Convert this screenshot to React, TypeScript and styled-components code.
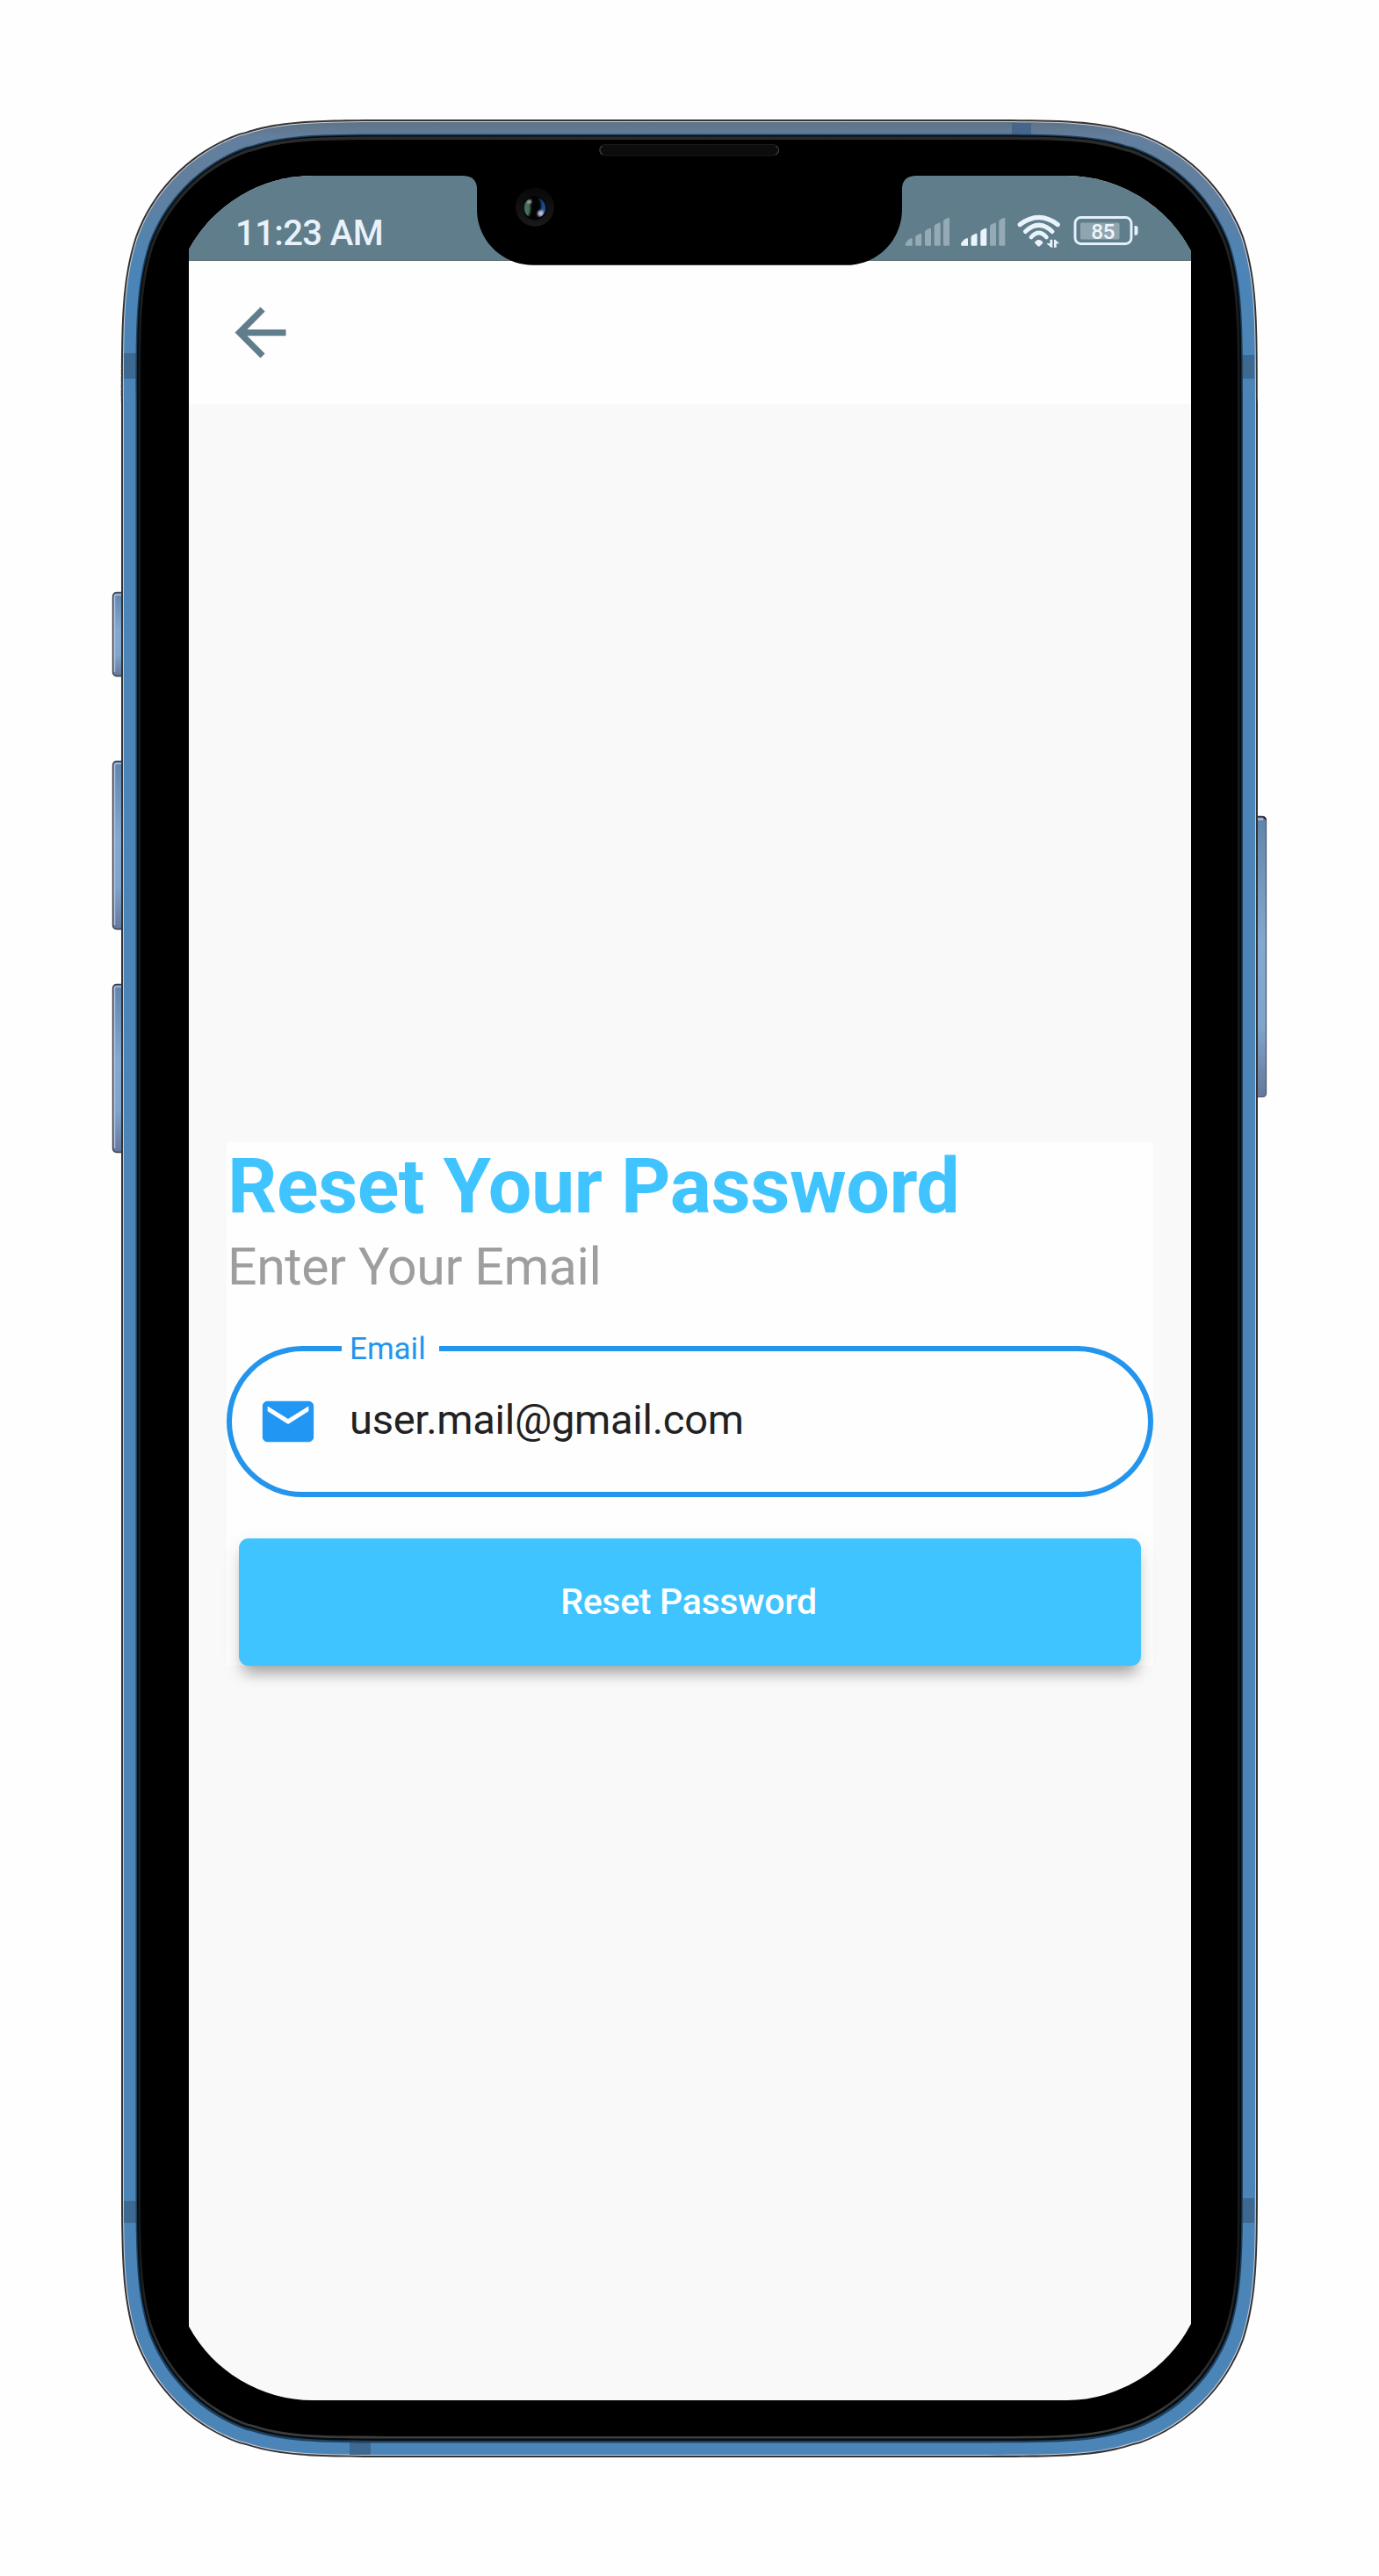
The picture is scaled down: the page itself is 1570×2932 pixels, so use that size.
import React from "react";
import styled, { createGlobalStyle } from "styled-components";

const GlobalStyle = createGlobalStyle`
  *, *::before, *::after { box-sizing: border-box; }
  body { margin: 0; background: #fefefe; font-family: Roboto, "Liberation Sans", sans-serif; }
`;

/** Rounded rectangle with continuous-curvature corners. */
function squircle(x: number, y: number, w: number, h: number, r: number) {
  const a = 1.52866471 * r, b = 1.08849323 * r, c = 0.86840701 * r, d = 0.66993427 * r;
  const e = 0.065496 * r, f = 0.63149399 * r, g = 0.07491176 * r, i = 0.37282392 * r, j = 0.16905899 * r;
  const X = x + w, Y = y + h;
  return [
    `M${x + a} ${y}H${X - a}`,
    `C${X - b} ${y} ${X - c} ${y} ${X - d} ${y + e}L${X - f} ${y + g}`,
    `C${X - i} ${y + j} ${X - j} ${y + i} ${X - g} ${y + f}`,
    `C${X} ${y + c} ${X} ${y + b} ${X} ${y + a}V${Y - a}`,
    `C${X} ${Y - b} ${X} ${Y - c} ${X - g} ${Y - f}`,
    `C${X - j} ${Y - i} ${X - i} ${Y - j} ${X - f} ${Y - g}L${X - d} ${Y - e}`,
    `C${X - c} ${Y} ${X - b} ${Y} ${X - a} ${Y}H${x + a}`,
    `C${x + b} ${Y} ${x + c} ${Y} ${x + d} ${Y - e}L${x + f} ${Y - g}`,
    `C${x + i} ${Y - j} ${x + j} ${Y - i} ${x + g} ${Y - f}`,
    `C${x} ${Y - c} ${x} ${Y - b} ${x} ${Y - a}V${y + a}`,
    `C${x} ${y + b} ${x} ${y + c} ${x + g} ${y + f}`,
    `C${x + j} ${y + i} ${x + i} ${y + j} ${x + f} ${y + g}L${x + d} ${y + e}`,
    `C${x + c} ${y} ${x + b} ${y} ${x + a} ${y}Z`,
  ].join("");
}

const Page = styled.main`
  position: relative;
  width: 1570px;
  height: 2932px;
  padding: 200px 214px 200px 215px;
  background: #fefefe;
  overflow: hidden;
`;

const FrameArt = styled.svg`
  position: absolute;
  inset: 0;
`;

const NotchArt = styled.svg`
  position: absolute;
  left: 528px;
  top: 199px;
`;

const Screen = styled.section`
  position: relative;
  display: flex;
  flex-direction: column;
  width: 1141px;
  height: 2532px;
  background: #f9f9f9;
  clip-path: path("M0 84A161 161 0 0 1 141 0H1000A161 161 0 0 1 1141 86V2445A161 161 0 0 1 1000 2532H141A161 161 0 0 1 0 2448Z");
`;

const StatusBar = styled.header`
  display: flex;
  justify-content: space-between;
  height: 97px;
  padding: 41px 60px 0 53px;
  background: #607d8b;
  border-bottom: 1px solid #627679;
`;

const Clock = styled.time`
  padding-top: 1px;
  font-size: 40px;
  line-height: 48px;
  font-weight: 500;
  letter-spacing: -0.6px;
  color: #e9f1fa;
`;

const StatusIcons = styled.svg`
  display: block;
`;

const AppBar = styled.nav`
  height: 163px;
  padding: 38px;
  background: #fefefe;
`;

const BackButton = styled.button`
  display: block;
  padding: 0;
  border: 0;
  background: none;
  color: #607d8b;
  line-height: 0;
`;

const Body = styled.div`
  flex: 1;
  padding: 840px 43px 0;
`;

const Card = styled.form`
  display: flex;
  flex-direction: column;
  height: 595.5px;
  background: #fefefe;
`;

const Title = styled.h1`
  margin: 0;
  padding-left: 1px;
  font-size: 88px;
  line-height: 100px;
  font-weight: 700;
  letter-spacing: -0.45px;
  color: #40c4ff;
  white-space: nowrap;
`;

const Subtitle = styled.p`
  margin: 7px 0 0;
  padding-left: 1px;
  font-size: 59px;
  line-height: 69px;
  letter-spacing: -0.4px;
  color: #9e9e9e;
  white-space: nowrap;
`;

const Field = styled.fieldset`
  height: 190px;
  min-width: 0;
  margin: 38px 0 0;
  padding: 0 0 0 29px;
  border: 6px solid #2395ec;
  border-radius: 86px;
`;

const FieldLabel = styled.legend`
  width: 111px;
  margin-left: 96px;
  padding: 2px 0 0 9px;
  font-size: 35px;
  line-height: 40px;
  color: #2395ec;
`;

const FieldRow = styled.div`
  display: flex;
  align-items: center;
  height: 124px;
  color: #2196f3;
`;

const FieldInput = styled.input`
  flex: 1;
  min-width: 0;
  margin-left: 35px;
  padding: 0 0 5px;
  border: 0;
  outline: 0;
  background: none;
  font: 400 47px/56px Roboto, "Liberation Sans", sans-serif;
  letter-spacing: -0.25px;
  color: #212121;
`;

const SubmitButton = styled.button`
  height: 145px;
  margin: auto 14px 0;
  padding: 0 3px 1px 0;
  border: 0;
  border-radius: 11px;
  background: #3fc4ff;
  color: #fff;
  font: 500 41px/48px Roboto, "Liberation Sans", sans-serif;
  letter-spacing: -0.3px;
  box-shadow: 0 14px 15px -6px rgba(0, 0, 0, 0.26), 0 8px 22px rgba(0, 0, 0, 0.12);
`;

function DeviceFrame() {
  return (
    <FrameArt width="1570" height="2932" viewBox="0 0 1570 2932">
      <defs>
        <linearGradient id="metal" gradientUnits="userSpaceOnUse" x1="0" y1="139" x2="0" y2="310">
          <stop offset="0" stopColor="#5f7386" />
          <stop offset="0.1" stopColor="#637f9d" />
          <stop offset="0.45" stopColor="#617f9e" />
          <stop offset="1" stopColor="#4b85b8" />
        </linearGradient>
        <linearGradient id="key" x1="0" y1="0" x2="0" y2="1">
          <stop offset="0" stopColor="#5f85ab" />
          <stop offset="0.45" stopColor="#82a9cf" />
          <stop offset="0.75" stopColor="#7ea5cb" />
          <stop offset="1" stopColor="#65789c" />
        </linearGradient>
        <linearGradient id="rim" x1="0" y1="0" x2="0" y2="1">
          <stop offset="0" stopColor="#2b2b2b" />
          <stop offset="0.1" stopColor="#14191c" />
          <stop offset="0.92" stopColor="#14191c" />
          <stop offset="1" stopColor="#3d3d3d" />
        </linearGradient>
      </defs>
      {[[674, 96], [866, 192], [1120, 192]].map(([y, h]) => (
        <g key={y}>
          <rect x="128.5" y={y + 0.5} width="16" height={h - 1} rx="4" fill="url(#key)" stroke="#3b3c4c" strokeWidth="1.4" />
          <path d={`M130.5 ${y + h - 5}V${y + 5}Q130.5 ${y + 3} 133 ${y + 3}H138`} fill="none" stroke="#b3c0df" strokeWidth="1.5" />
        </g>
      ))}
      <rect x="1426" y="929.5" width="15.5" height="319" rx="4" fill="url(#key)" stroke="#53546b" strokeWidth="1.2" />
      <path d="M1432 929.5H1437Q1440 929.5 1441 933" fill="none" stroke="#22222a" strokeWidth="1.6" />
      <path d="M1432 932.5H1438" stroke="#b9bfdd" strokeWidth="2" />
      <path d={squircle(138, 136, 1294, 2661, 212)} fill="#333334" />
      <path d={squircle(140, 138, 1290, 2657, 210)} fill="#d0ced6" />
      <path d={squircle(141, 139, 1288, 2655, 209)} fill="url(#metal)" />
      <g fill="#3d688f">
        <rect x="141" y="402" width="16" height="29" />
        <rect x="1413" y="404" width="15" height="27" />
        <rect x="1152" y="140" width="22" height="17" fill="#46658a" />
        <rect x="398" y="2778" width="24" height="16" />
        <rect x="141" y="2505" width="16" height="25" />
        <rect x="1413" y="2502" width="15" height="28" />
      </g>
      <path d={squircle(154.5, 152.5, 1260.5, 2628, 198)} fill="#1d405f" />
      <path d={squircle(156, 154, 1257.5, 2624, 197)} fill="#060b10" />
      <path d={squircle(157.5, 155.5, 1254, 2620, 195.5)} fill="url(#rim)" />
      <path d={squircle(160, 159, 1249, 2614, 193)} fill="#000" />
      <rect x="682.5" y="164.5" width="204" height="12.5" rx="6" fill="#0c0c0d" stroke="#1a1a1b" />
      <path d="M686 166Q683 168 683 171Q683 174 686 176M883 166Q886.5 168 886.5 171Q886.5 174 883 176" fill="none" stroke="#3b3b3d" strokeWidth="1.2" />
    </FrameArt>
  );
}

function Notch() {
  return (
    <NotchArt width="514" height="104" viewBox="528 199 514 104">
      <defs>
        <linearGradient id="ring" x1="0" y1="0" x2="0" y2="1">
          <stop offset="0" stopColor="#080808" />
          <stop offset="1" stopColor="#191919" />
        </linearGradient>
        <clipPath id="lens"><circle cx="609" cy="236.5" r="12.5" /></clipPath>
        <filter id="soft"><feGaussianBlur stdDeviation="0.8" /></filter>
      </defs>
      <path d="M528 199V200Q543 201 543 215V238C543 274 572 301.7 607 301.7H964C998 301.7 1027 274 1027 238V215Q1027 201 1042 200V199Z" fill="#000" />
      <circle cx="609" cy="235.7" r="22" fill="url(#ring)" />
      <circle cx="609" cy="236.7" r="13.7" fill="#030303" />
      <g clipPath="url(#lens)" filter="url(#soft)">
        <ellipse cx="600" cy="237" rx="4" ry="10" fill="#456f5d" />
        <path d="M613 225C619 227 622 233 622 240L615 247Q613 243 616 237Q617 230 613 225Z" fill="#1b4f94" />
        <circle cx="603" cy="229.5" r="2.2" fill="#a9b5ad" />
        <circle cx="615.5" cy="243" r="3.5" fill="#bcbcdc" />
      </g>
    </NotchArt>
  );
}

const BARS = [[0, 24.3], [11.5, 18.5], [22.3, 12.5], [33, 6.2], [43.3, 0.6]];

function Signal({ x, level }: { x: number; level: number }) {
  return (
    <g transform={`translate(${x} 6)`}>
      {BARS.map(([bx, top], i) => (
        <path
          key={bx}
          d={i === 0
            ? "M0 31.500Q0 29 2 27.500L4.500 25Q6 24 8 24.300V32.800H1.500Q0 32.800 0 31.500Z"
            : `M${bx} ${top + 4.5}Q${bx} ${top + 3} ${bx + 1.5} ${top + 2.2}L${bx + 5.5} ${top + 0.3}Q${bx + 7} ${top} ${bx + 7} ${top + 1.5}V31.6Q${bx + 7} 32.8 ${bx + 5.8} 32.8H${bx + 1.2}Q${bx} 32.8 ${bx} 31.6Z`}
          fill={i < level ? "#ecf4fb" : "#94abb6"}
        />
      ))}
    </g>
  );
}

function SystemIcons() {
  return (
    <StatusIcons width="266" height="48" viewBox="0 0 266 48">
      <Signal x={0.7} level={0} />
      <Signal x={64} level={3} />
      <g transform="translate(128 4)" fill="none" stroke="#e9f3fb" strokeLinecap="round">
        <path d="M3.200 10.600Q24.700 -5.600 46.200 10.600" strokeWidth="5.200" />
        <path d="M9.500 18.500Q24.700 4 39.900 18.500" strokeWidth="5" />
        <path d="M16 25Q24.700 15 33.400 25" strokeWidth="4.800" />
        <path d="M20 30.500Q24.700 25 29.400 30.500Q29.600 31.500 28.500 32.500L26 35Q24.700 36.200 23.400 35L20.900 32.500Q19.800 31.500 20 30.500Z" fill="#e9f3fb" stroke="none" />
        <path d="M37.500 27.800H40.300V36.700H38.800L33.300 32H37.500ZM42 36.700V27.800H43.300L48.200 32.300H44.700V36.700Z" fill="#e9f3fb" stroke="none" />
      </g>
      <rect x="194" y="6.500" width="64" height="30" rx="6.500" fill="none" stroke="#e4f0fc" strokeWidth="2.900" />
      <rect x="200" y="12.500" width="44.500" height="19" rx="1.500" fill="#8fa5af" />
      <path d="M261.500 16H263Q265.500 16 265.500 18.500V24Q265.500 26.700 263 26.700H261.500Z" fill="#e4f0fc" />
      <text x="225.500" y="31" textAnchor="middle" fontFamily="Roboto, sans-serif" fontSize="24.500" letterSpacing="-0.600" fontWeight="500" fill="#eef5fa">85</text>
    </StatusIcons>
  );
}

export default function App() {
  return (
    <>
      <GlobalStyle />
      <Page>
        <DeviceFrame />
        <Screen>
          <StatusBar>
            <Clock>11:23 AM</Clock>
            <SystemIcons />
          </StatusBar>
          <AppBar>
            <BackButton aria-label="Back">
              <svg width="87" height="87" viewBox="0 0 24 24" fill="currentColor">
                <path d="M20 11H7.830l5.590-5.590L12 4l-8 8 8 8 1.410-1.410L7.830 13H20z" />
              </svg>
            </BackButton>
          </AppBar>
          <Body>
            <Card onSubmit={(e) => e.preventDefault()}>
              <Title>Reset Your Password</Title>
              <Subtitle>Enter Your Email</Subtitle>
              <Field>
                <FieldLabel>Email</FieldLabel>
                <FieldRow>
                  <svg width="70" height="70" viewBox="0 0 24 24" fill="currentColor">
                    <path d="M20 4H4c-1.100 0-1.990.9-1.990 2L2 18c0 1.100.9 2 2 2h16c1.100 0 2-.9 2-2V6c0-1.100-.9-2-2-2zm0 4l-8 5-8-5V6l8 5 8-5v2z" />
                  </svg>
                  <FieldInput aria-label="Email" defaultValue="user.mail@gmail.com" />
                </FieldRow>
              </Field>
              <SubmitButton>Reset Password</SubmitButton>
            </Card>
          </Body>
        </Screen>
        <Notch />
      </Page>
    </>
  );
}
